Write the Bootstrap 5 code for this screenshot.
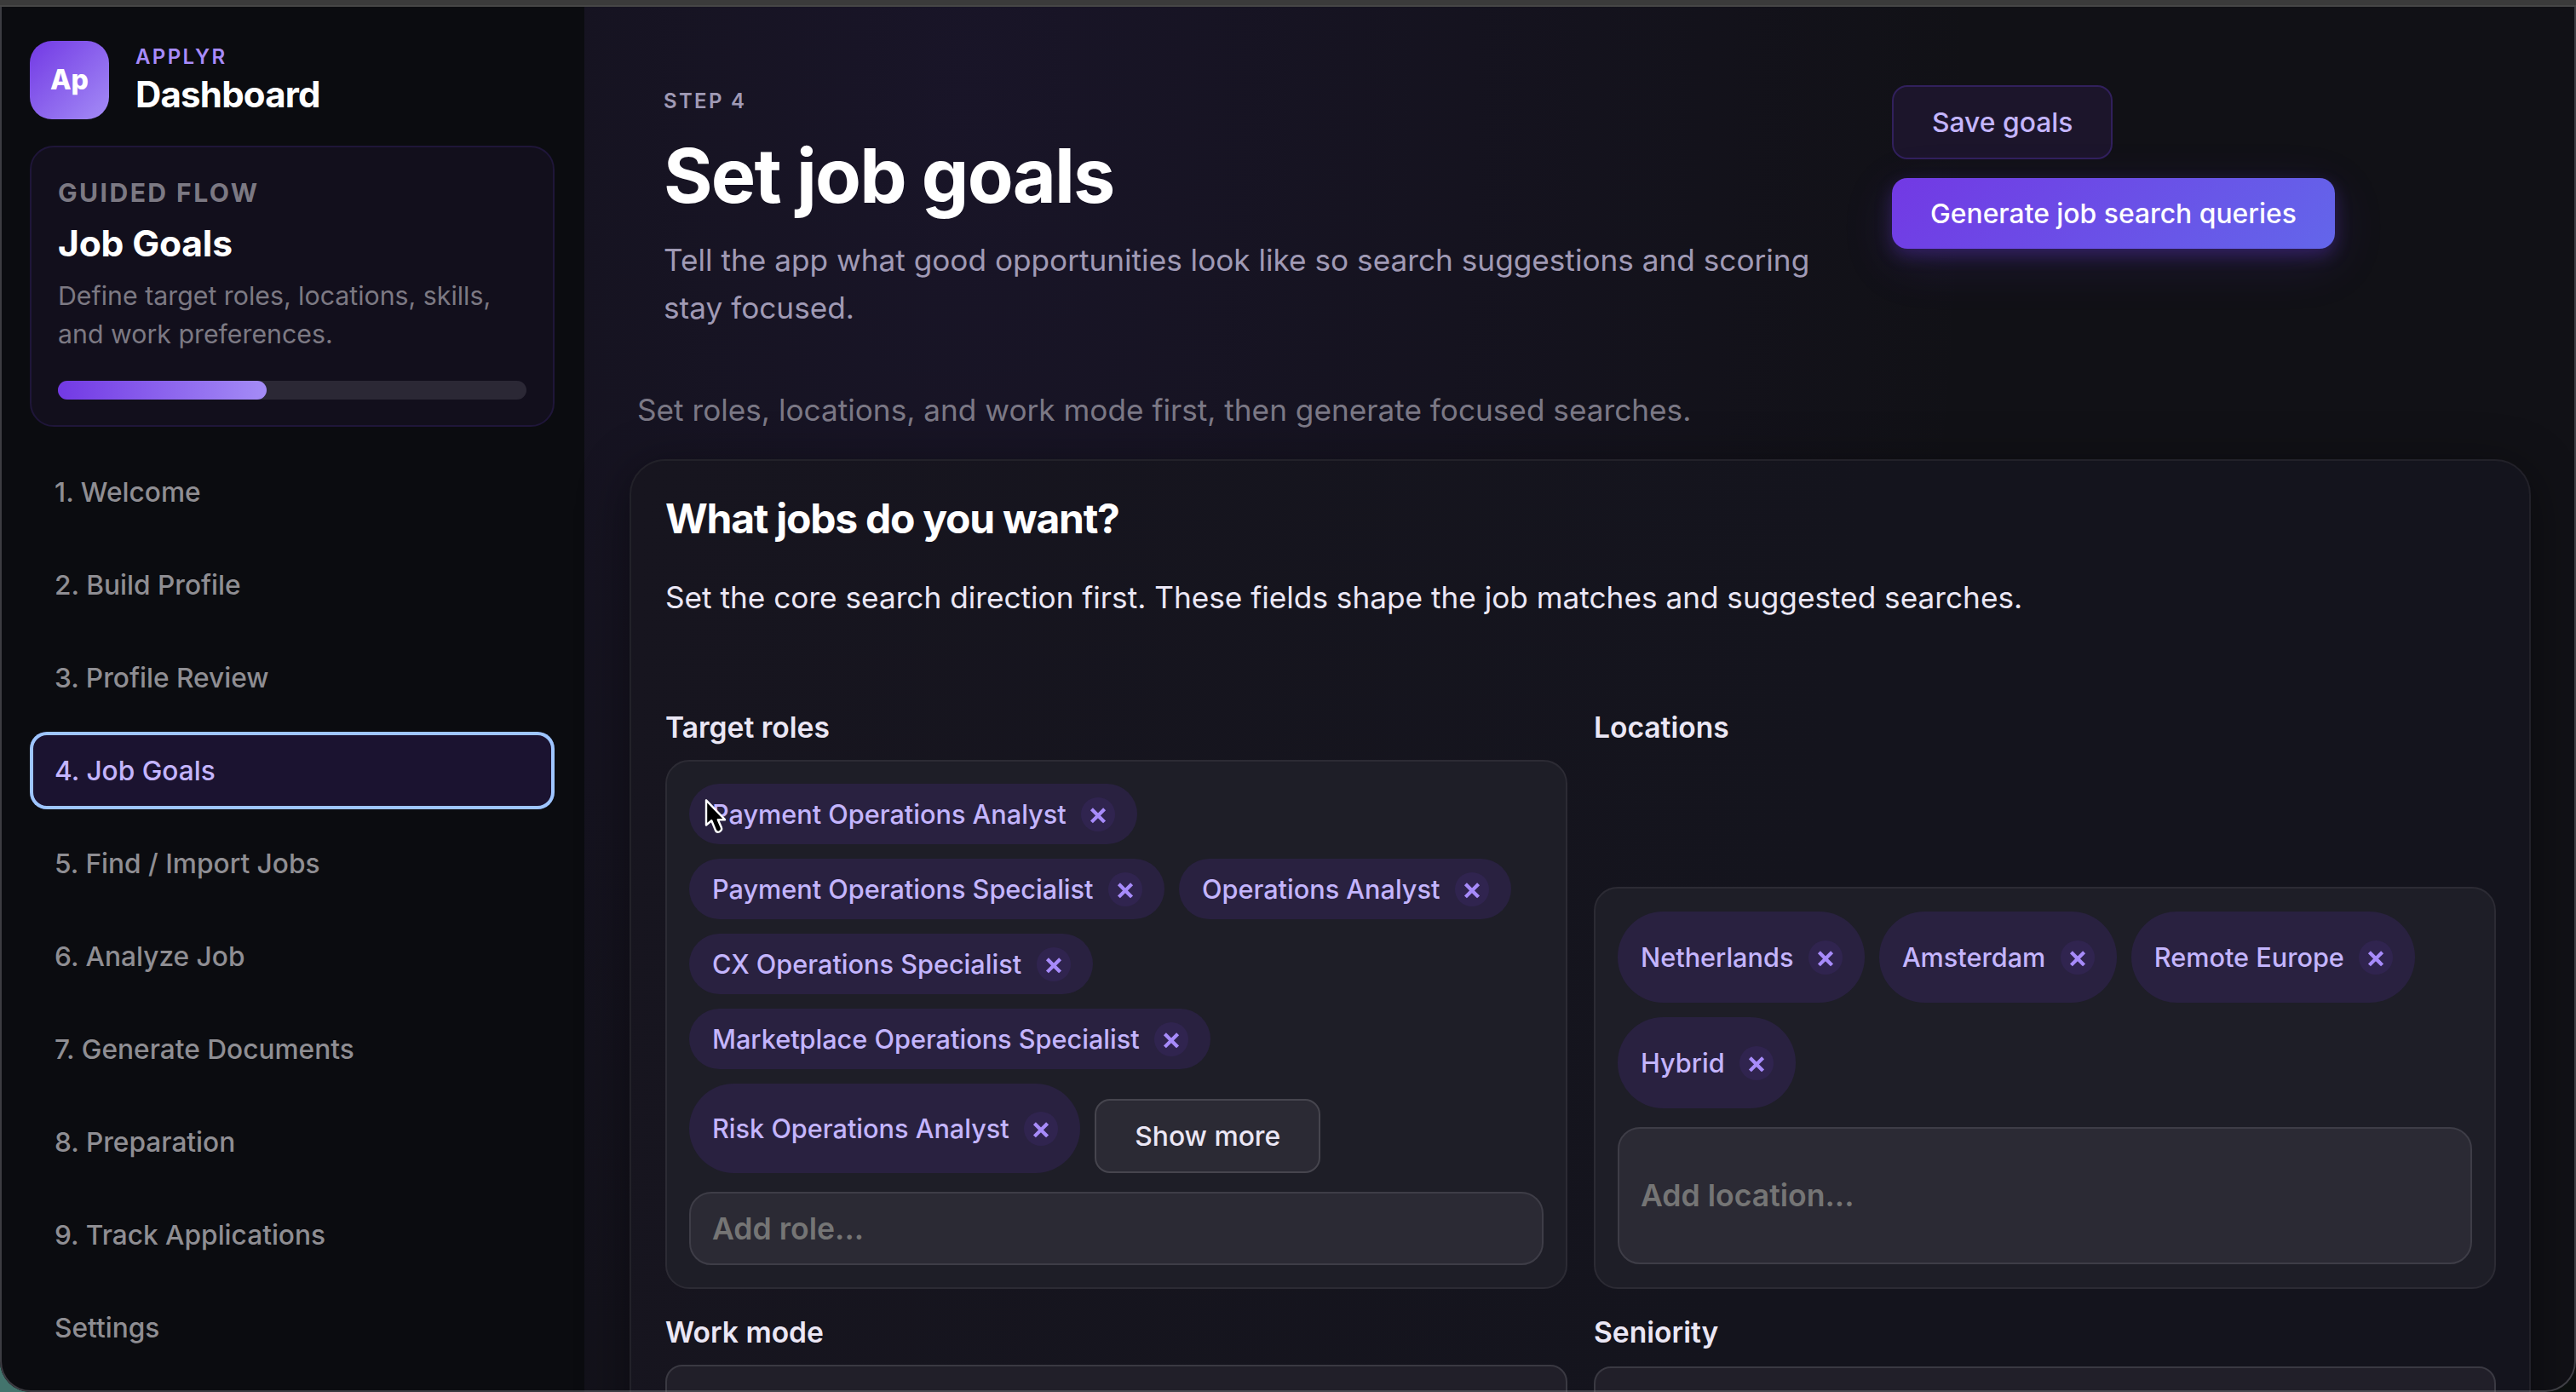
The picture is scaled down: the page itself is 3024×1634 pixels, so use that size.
<!DOCTYPE html>
<html lang="en">
<head>
<meta charset="utf-8">
<title>Applyr Dashboard</title>
<link href="https://cdn.jsdelivr.net/npm/bootstrap@5.3.0/dist/css/bootstrap.min.css" rel="stylesheet">
<style>
html,body{height:100%}
body{margin:0;position:relative;background:linear-gradient(90deg,#43746d 0,#43746d 60px,#0c100f 61px);font-family:Inter,"Noto Sans",sans-serif;color:#ebe7f5;overflow:hidden}
.top-strip{height:8px;background:#3b3b3b;border-bottom:2px solid #464646}
.app-shell{height:1626px;overflow:hidden;border-radius:0 0 36px 36px;background:
 radial-gradient(ellipse 1200px 2300px at 1130px 100px,rgba(109,60,230,.085),rgba(109,60,230,0) 100%),#111116}
.side{width:686px;background:#0b0c10;padding:40px 35px 0}
.logo{width:93px;height:92px;border-radius:26px;background:linear-gradient(135deg,#7239e4,#a48cf6);font-size:32px;font-weight:800;color:#fff}
.brand-block{margin-left:31px}
.brand-name{font-size:24px;line-height:29px;font-weight:600;letter-spacing:2.4px;color:#a78bfa;margin-bottom:5px}
.brand-title{font-size:42px;line-height:50px;font-weight:700;letter-spacing:-.8px;color:#fff}
.flow{height:330px;margin-top:31px;border:2px solid #1f1639;border-radius:28px;background:#120f1c;padding:31px}
.flow-k{font-size:30.2px;line-height:45px;font-weight:700;letter-spacing:2.4px;color:#7c7983}
.flow-t{font-size:42.6px;line-height:50px;font-weight:700;letter-spacing:-.2px;color:#fff;margin-top:12px}
.flow-d{font-size:30.3px;line-height:45px;color:#7c7983;margin-top:14px}
.track{height:22px;border-radius:11px;background:#2b2835;margin-top:32px}
.track-fill{height:22px;border-radius:11px;background:linear-gradient(90deg,#7239e4,#a48cf6)}
.steps{gap:18px;margin-top:31px}
.steps .nav-link{height:91px;padding:0 29px;border-radius:20px;font-size:31.65px;font-weight:500;color:#8f8e93;display:flex;align-items:center}
.steps .nav-link.active{background:#1b1330;color:#c4b5fd;box-shadow:inset 0 0 0 4px #9ec5ff}
.content-area{padding:0 53px;min-width:0}
.hero{padding:92px 40px 0 40px;height:445px}
.kick{font-size:24px;line-height:36px;font-weight:600;letter-spacing:2.3px;color:#a09ab5;margin-top:1px}
.hero-title{font-size:88px;line-height:100px;font-weight:700;letter-spacing:-1.8px;color:#fff;margin:19px 0 21px}
.hero-text{font-size:35.2px;line-height:56px;color:#a09ab5;width:1360px}
.hero-actions{margin-left:82px;gap:22px}
.hint{font-size:35.2px;line-height:56px;color:#7b7885;padding-left:9px;margin-bottom:30px}
.btn-a{height:87px;border:2px solid #31205c;border-radius:18px;background:#1c152b;color:#c4b5fd;font-size:31.8px;font-weight:500;padding:0 45px}
.btn-b{height:83px;border:0;border-radius:18px;background:linear-gradient(135deg,#7239e4,#6366ea);color:#fff;font-size:31.85px;font-weight:500;padding:0 45px;box-shadow:0 8px 20px rgba(109,60,230,.3),0 16px 60px rgba(109,60,230,.15)}
.panel{border:2px solid #222129;border-radius:42px;background:linear-gradient(100deg,#17151f,#14141d 60%);padding:36px 39px 0 40px;height:1300px;box-shadow:0 10px 60px rgba(0,0,0,.4)}
.panel h2{font-size:48px;line-height:64px;font-weight:700;letter-spacing:-1.25px;color:#fff;margin:0 0 32px}
.panel-p{font-size:35.2px;line-height:56px;margin-bottom:101px}
.lab{font-size:33.6px;line-height:48px;font-weight:600;margin-bottom:14px}
.duo{display:grid;grid-template-columns:1059px 1059px;column-gap:31px;row-gap:27px}
.box{border:2px solid #2c2b34;border-radius:28px;background:#1e1e27;padding:26px;height:621px}
.box-low{height:472px;padding-top:27px}
.chips{gap:17px;margin-bottom:22px}
.chip{height:71px;border-radius:54px;background:#292140;color:#c4b5fd;font-size:30.65px;font-weight:500;padding:0 26px 0 27px;gap:17.5px;white-space:nowrap}
.chip.tall{height:105px}
.box-low .chip{height:107px}
.x{width:40px;height:40px;border-radius:50%;background:#30244f;flex:none}
.more{height:87px;border:2px solid #46454e;border-radius:18px;background:#2b2a34;color:#ebe7f5;font-size:31.8px;font-weight:500;padding:0 45px}
.field{display:block;height:86px;border:2px solid #3e3d47;border-radius:26px;background:#2b2a34;color:#ebe7f5;font-size:35.6px;font-weight:600;padding:0 25px;width:100%}
.box-low .field{height:161px}
.field::placeholder{color:#757575;opacity:1}
.sel{height:100px;border:2px solid #3a3942;border-radius:20px;background:#211f29}
.window-edge{position:absolute;left:0;top:8px;width:3024px;height:1626px;border:2px solid rgba(130,130,136,.42);border-top:0;border-radius:0 0 36px 36px;pointer-events:none}
.cur{position:absolute;left:820px;top:932px}
</style>
</head>
<body>
<svg width="0" height="0" class="position-absolute"><symbol id="cross" viewBox="0 0 40 40"><path d="M13.9 15.2l12.2 12.2M26.1 15.2L13.9 27.4" stroke="#a78bfa" stroke-width="4.2" stroke-linecap="square"/></symbol></svg>
<div class="top-strip"></div>
<div class="app-shell d-flex">
 <aside class="side flex-shrink-0">
  <div class="d-flex align-items-center">
   <div class="logo d-flex align-items-center justify-content-center">Ap</div>
   <div class="brand-block"><div class="brand-name">APPLYR</div><div class="brand-title">Dashboard</div></div>
  </div>
  <div class="flow">
   <div class="flow-k">GUIDED FLOW</div>
   <div class="flow-t">Job Goals</div>
   <div class="flow-d">Define target roles, locations, skills, and work preferences.</div>
   <div class="track"><div class="track-fill" style="width:44.6%"></div></div>
  </div>
  <nav class="nav flex-column steps">
   <a class="nav-link">1. Welcome</a>
   <a class="nav-link">2. Build Profile</a>
   <a class="nav-link">3. Profile Review</a>
   <a class="nav-link active">4. Job Goals</a>
   <a class="nav-link">5. Find / Import Jobs</a>
   <a class="nav-link">6. Analyze Job</a>
   <a class="nav-link">7. Generate Documents</a>
   <a class="nav-link">8. Preparation</a>
   <a class="nav-link">9. Track Applications</a>
   <a class="nav-link">Settings</a>
  </nav>
 </aside>
 <main class="content-area flex-grow-1">
  <header class="hero d-flex">
   <div>
    <div class="kick">STEP 4</div>
    <h1 class="hero-title">Set job goals</h1>
    <div class="hero-text">Tell the app what good opportunities look like so search suggestions and scoring stay focused.</div>
   </div>
   <div class="hero-actions d-flex flex-column align-items-start">
    <button class="btn-a">Save goals</button>
    <button class="btn-b">Generate job search queries</button>
   </div>
  </header>
  <div class="hint">Set roles, locations, and work mode first, then generate focused searches.</div>
  <section class="panel">
   <h2>What jobs do you want?</h2>
   <div class="panel-p">Set the core search direction first. These fields shape the job matches and suggested searches.</div>
   <div class="duo">
    <div>
     <div class="lab">Target roles</div>
     <div class="box">
      <div class="chips d-flex flex-wrap align-items-end">
       <span class="chip d-flex align-items-center">Payment Operations Analyst<svg class="x"><use href="#cross"/></svg></span>
       <span class="chip d-flex align-items-center">Payment Operations Specialist<svg class="x"><use href="#cross"/></svg></span>
       <span class="chip d-flex align-items-center">Operations Analyst<svg class="x"><use href="#cross"/></svg></span>
       <span class="chip d-flex align-items-center">CX Operations Specialist<svg class="x"><use href="#cross"/></svg></span>
       <span class="chip d-flex align-items-center">Marketplace Operations Specialist<svg class="x"><use href="#cross"/></svg></span>
       <span class="chip tall d-flex align-items-center">Risk Operations Analyst<svg class="x"><use href="#cross"/></svg></span>
       <button class="more">Show more</button>
      </div>
      <input class="field" placeholder="Add role...">
     </div>
    </div>
    <div class="d-flex flex-column justify-content-between">
     <div class="lab">Locations</div>
     <div class="box box-low">
      <div class="chips d-flex flex-wrap">
       <span class="chip d-flex align-items-center">Netherlands<svg class="x"><use href="#cross"/></svg></span>
       <span class="chip d-flex align-items-center">Amsterdam<svg class="x"><use href="#cross"/></svg></span>
       <span class="chip d-flex align-items-center">Remote Europe<svg class="x"><use href="#cross"/></svg></span>
       <span class="chip d-flex align-items-center">Hybrid<svg class="x"><use href="#cross"/></svg></span>
      </div>
      <input class="field" placeholder="Add location...">
     </div>
    </div>
    <div><div class="lab">Work mode</div><div class="sel"></div></div>
    <div><div class="lab mb-3">Seniority</div><div class="sel"></div></div>
   </div>
  </section>
 </main>
</div>
<div class="window-edge"></div>
<svg class="cur" width="40" height="52" viewBox="0 0 40 52"><path d="M9 7.3V36.5L15.3 31.3L19.8 42.2Q21.1 45.6 24.5 44.3Q28.1 42.6 26.8 39.3L22.8 30.2H31Z" fill="#000" stroke="#fff" stroke-width="2.4" stroke-linejoin="round"/></svg>
<script src="https://cdn.jsdelivr.net/npm/bootstrap@5.3.0/dist/js/bootstrap.bundle.min.js"></script>
</body>
</html>
